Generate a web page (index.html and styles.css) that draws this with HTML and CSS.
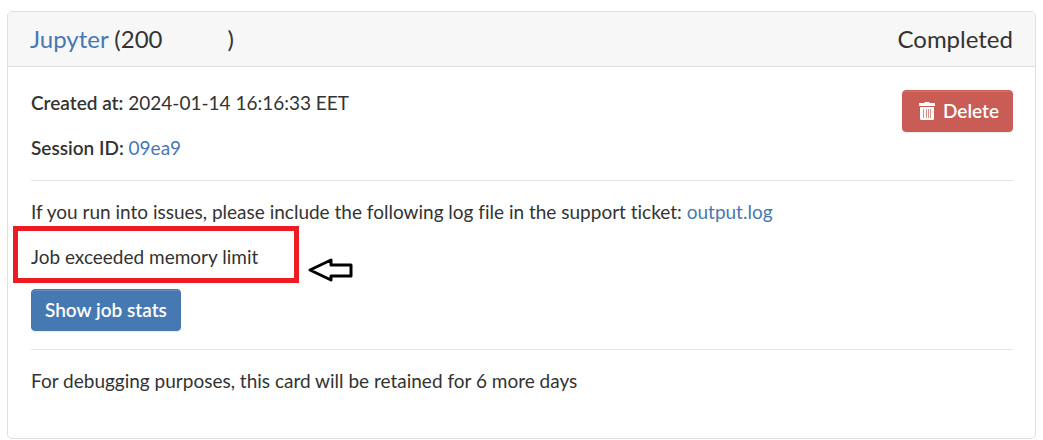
FILE: index.html
```html
<!DOCTYPE html>
<html lang="en">
<head>
<meta charset="utf-8">
<meta name="viewport" content="width=device-width, initial-scale=1">
<title>Jupyter session</title>
<link rel="stylesheet" href="styles.css">
</head>
<body>
<article class="card">
  <header class="card-header">
    <h1 class="card-title"><a href="#jupyter">Jupyter</a> (200<span class="hidden-id"></span>)</h1>
    <span class="card-status">Completed</span>
  </header>
  <div class="card-body">
    <div class="session">
      <div class="session-info">
        <p><strong>Created at:</strong> 2024-01-14 16:16:33 EET</p>
        <p><strong>Session ID:</strong> <a href="#session">09ea9</a></p>
      </div>
      <button type="button" class="btn btn-danger">
        <svg class="icon-trash" viewBox="0 0 16 18" aria-hidden="true">
          <path fill="#fff" d="M5.500 0h5v1H16v3H0V1h5.500z"/>
          <path fill="#fff" d="M1 5h14v11.500q0 1.500-1.500 1.500h-11q-1.500 0-1.500-1.500z"/>
          <path stroke="#dc8f8a" d="M4.500 7v9M7.500 7v9M9.500 7v9M11.500 7v9"/>
        </svg>
        Delete
      </button>
    </div>
    <hr>
    <p>If you run into issues, please include the following log file in the support ticket: <a href="#log">output.log</a></p>
    <p class="message">Job exceeded memory limit
      <span class="highlight"></span>
      <svg class="arrow" viewBox="0 0 46 26" aria-hidden="true"><path d="M2 13 23 3v5h20v11H23v4z" fill="#fff" stroke="#000" stroke-width="3" stroke-linejoin="round"/></svg>
    </p>
    <button type="button" class="btn btn-primary">Show job stats</button>
    <hr>
    <p>For debugging purposes, this card will be retained for 6 more days</p>
  </div>
</article>
</body>
</html>
```
FILE: styles.css
```css
* { box-sizing: border-box; }

body {
  margin: 11px 7px 0;
  background: #fff;
  color: #333;
  font: 19px/27px Lato, "Noto Sans", sans-serif;
  font-variant-ligatures: none;
}

a { color: #4678b2; text-decoration: none; }
strong { font-weight: 600; }
p { margin: 0 0 18px; }

hr {
  height: 1px;
  margin: 18px 0 17px;
  border: 0;
  background: #e5e5e5;
}

.card {
  border: 1px solid #dfdfdf;
  border-radius: 5px;
}

.card-header {
  display: flex;
  justify-content: space-between;
  padding: 13px 22px 14px;
  border-bottom: 1px solid #dfdfdf;
  border-radius: 4px 4px 0 0;
  background: #f7f7f7;
  font-size: 24px;
}

.card-title { margin: 0; font-size: 24px; font-weight: 400; }
.hidden-id { display: inline-block; width: 65px; }
.card-body { padding: 22px 22px 26px 23px; }

.session {
  display: flex;
  justify-content: space-between;
  align-items: flex-start;
  padding-bottom: 1px;
}

.session-info p:last-child { margin-bottom: 0; }

.btn {
  display: flex;
  align-items: center;
  gap: 8px;
  margin-top: 1px;
  padding: 6px 13px;
  border: 1px solid;
  border-radius: 4px;
  color: #fff;
  font: 600 19px/28px Lato, "Noto Sans", sans-serif;
  box-shadow: inset 0 1px 0 rgba(255, 255, 255, .15), 0 1px 1px rgba(0, 0, 0, .08);
}

.btn-danger { padding-left: 16px; border-color: #c95c54; background: #c95c54; }
.btn-primary { margin-top: 19px; border-color: #4678b2; background: #4678b2; }
.icon-trash { width: 16px; height: 18px; }
.message { position: relative; }

.highlight {
  position: absolute;
  top: -17px;
  left: -18px;
  width: 286px;
  height: 57px;
  border: 5px solid #ed1c24;
}

.arrow {
  position: absolute;
  top: 14px;
  left: 277px;
  width: 46px;
  height: 26px;
}
```
